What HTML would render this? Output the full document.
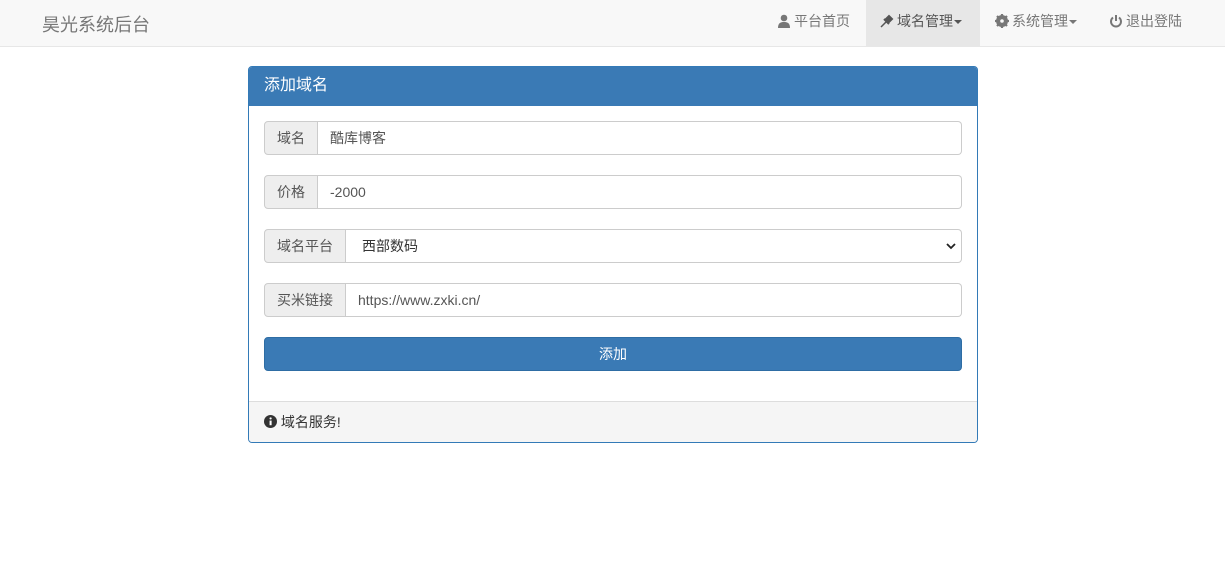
<!DOCTYPE html>
<html><head><meta charset="utf-8"><style>
*{box-sizing:border-box;margin:0;padding:0}
body{width:1225px;height:561px;background:#fff;font-family:"Liberation Sans","Noto Sans CJK SC",sans-serif;font-size:14px;color:#333;position:relative;overflow:hidden}
.nav{position:absolute;left:0;top:0;width:1225px;height:47px;background:#f8f8f8;border-bottom:1px solid #e7e7e7}
.brand{position:absolute;left:42px;top:11px;font-size:18px;color:#777}
.item{position:absolute;top:0;height:46px;line-height:42px;color:#777;font-size:14px;white-space:nowrap}
.item svg{vertical-align:-2px;margin-right:3px}
.caret{display:inline-block;width:0;height:0;border-left:4px solid transparent;border-right:4px solid transparent;border-top:4px solid #777;vertical-align:middle;margin-left:1px}
.panel{position:absolute;left:248px;top:66px;width:730px;height:377px;border:1px solid #337ab7;border-radius:4px;overflow:hidden}
.ph{height:39px;background:#3a7ab5;color:#fff;font-size:16px;line-height:38px;padding-left:15px}
.grp{position:absolute;left:15px;width:698px;height:34px;display:flex}
.addon{background:#eee;border:1px solid #ccc;border-radius:4px 0 0 4px;color:#555;line-height:32px;padding:0 12px;font-size:14px}
.inp{flex:1;border:1px solid #ccc;border-left:none;border-radius:0 4px 4px 0;line-height:32px;padding-left:12px;color:#555;position:relative}
.btn{position:absolute;left:15px;top:270px;width:698px;height:34px;background:#3a7ab5;border:1px solid #2e6da4;border-radius:4px;color:#fff;text-align:center;line-height:32px}
.pf{position:absolute;left:0;top:334px;width:728px;height:41px;background:#f5f5f5;border-top:1px solid #ddd;line-height:40px;padding-left:15px}
</style></head><body>
<div class="nav">
<div class="brand">昊光系统后台</div>
<div class="item" style="left:777px"><svg width="14" height="14" viewBox="0 0 14 14"><circle cx="7" cy="4" r="3.3" fill="#777"/><path d="M1 14c0-5 2.5-6 6-6s6 1 6 6z" fill="#777"/></svg>平台首页</div>
<div class="item" style="left:866px;width:114px;background:#e7e7e7;padding-left:14px;color:#555"><svg width="14" height="14" viewBox="0 0 14 14"><path d="M1 13l5-5" stroke="#555" stroke-width="1.5"/><path d="M5 6l4-4 3 3-4 4z M4 5l5 5" stroke="#555" stroke-width="2" fill="#555"/></svg>域名管理<span class="caret" style="border-top-color:#555"></span></div>
<div class="item" style="left:995px"><svg width="14" height="14" viewBox="0 0 14 14"><circle cx="7" cy="7" r="4.5" fill="none" stroke="#777" stroke-width="3"/><path d="M7 0v14M0 7h14M2 2l10 10M12 2L2 12" stroke="#777" stroke-width="2.2"/><circle cx="7" cy="7" r="1.8" fill="#f8f8f8"/></svg>系统管理<span class="caret"></span></div>
<div class="item" style="left:1109px"><svg width="14" height="14" viewBox="0 0 14 14"><path d="M4 3.5A5 5 0 1 0 10 3.5" fill="none" stroke="#777" stroke-width="2"/><path d="M7 1v6" stroke="#777" stroke-width="2"/></svg>退出登陆</div>
</div>
<div class="panel">
<div class="ph">添加域名</div>
<div class="grp" style="top:54px"><div class="addon">域名</div><div class="inp">酷库博客</div></div>
<div class="grp" style="top:108px"><div class="addon">价格</div><div class="inp">-2000</div></div>
<div class="grp" style="top:162px"><div class="addon">域名平台</div><div class="inp" style="color:#333;padding-left:16px">西部数码<svg style="position:absolute;right:5px;top:12px" width="10" height="8" viewBox="0 0 10 8"><path d="M1 2l4 4 4-4" stroke="#222" stroke-width="1.8" fill="none"/></svg></div></div>
<div class="grp" style="top:216px"><div class="addon">买米链接</div><div class="inp">https://www.zxki.cn/</div></div>
<div class="btn">添加</div>
<div class="pf"><svg width="13" height="13" viewBox="0 0 14 14" style="vertical-align:-1px"><circle cx="7" cy="7" r="7" fill="#333"/><rect x="6" y="6" width="2.2" height="5" fill="#fff"/><circle cx="7.1" cy="3.7" r="1.2" fill="#fff"/></svg> 域名服务!</div>
</div>
</body></html>
